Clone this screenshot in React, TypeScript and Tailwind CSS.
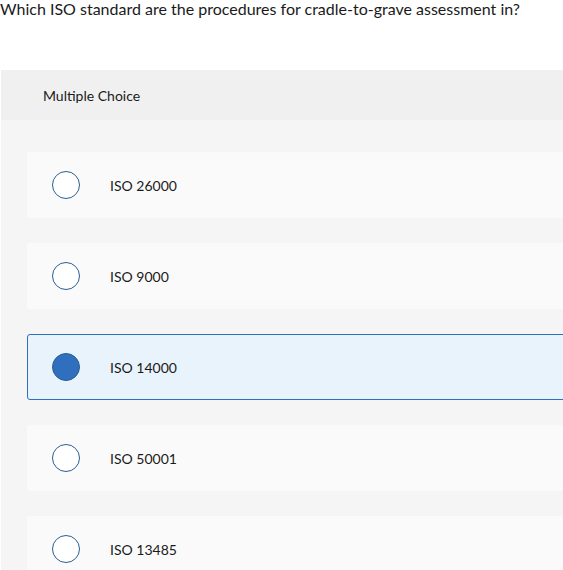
import React from "react";

const options = ["ISO 26000", "ISO 9000", "ISO 14000", "ISO 50001", "ISO 13485"];
const selected = 2;

export default function App() {
  return (
    <div className="w-[563px] h-[570px] overflow-hidden bg-white text-[#1a1a1a]" style={{ fontFamily: "Lato, 'Open Sans', sans-serif" }}>
      <p className="text-[16px] leading-[18px] m-0 pt-0">Which ISO standard are the procedures for cradle-to-grave assessment in?</p>
      <div className="mt-[52px] ml-[1px] w-[620px] bg-[#f5f5f5]">
        <div className="h-[50px] bg-[#f0f0f0] pl-[42px] flex items-center text-[14px]">Multiple Choice</div>
        <div className="pl-[26px] pt-[32px] flex flex-col gap-[25px]">
          {options.map((o, i) => {
            const sel = i === selected;
            return (
              <div
                key={o}
                className={
                  sel
                    ? "h-[66px] rounded-[3px] border border-[#2f6fbd] bg-[#e8f3fc] flex items-center pl-[24px]"
                    : "h-[66px] rounded-[3px] border border-transparent bg-[#fafafa] flex items-center pl-[24px]"
                }
              >
                {sel ? (
                  <div className="w-[28px] h-[28px] rounded-full bg-[#2f6fbd] border-[1.5px] border-[#2a5e95]" />
                ) : (
                  <div className="w-[28px] h-[28px] rounded-full bg-white border-[1.5px] border-[#2a5e95]" />
                )}
                <span className="ml-[30px] text-[14px]">{o}</span>
              </div>
            );
          })}
        </div>
      </div>
    </div>
  );
}
